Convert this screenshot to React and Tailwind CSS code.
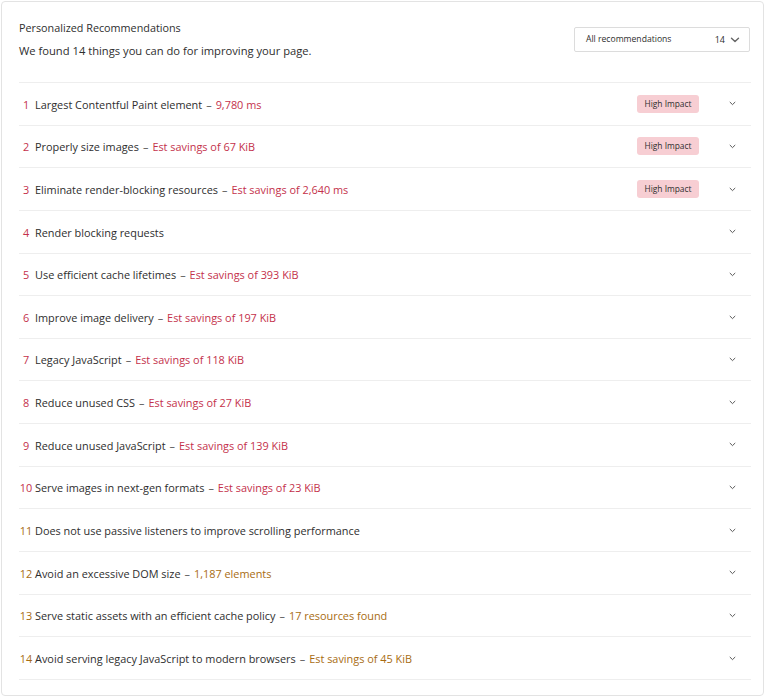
import React from "react";

const RED = "text-[#c4314b]";
const AMBER = "text-[#a86c12]";

const items = [
  { t: "Largest Contentful Paint element", d: "9,780 ms", c: "red", hi: true },
  { t: "Properly size images", d: "Est savings of 67 KiB", c: "red", hi: true },
  { t: "Eliminate render-blocking resources", d: "Est savings of 2,640 ms", c: "red", hi: true },
  { t: "Render blocking requests", d: null, c: "red" },
  { t: "Use efficient cache lifetimes", d: "Est savings of 393 KiB", c: "red" },
  { t: "Improve image delivery", d: "Est savings of 197 KiB", c: "red" },
  { t: "Legacy JavaScript", d: "Est savings of 118 KiB", c: "red" },
  { t: "Reduce unused CSS", d: "Est savings of 27 KiB", c: "red" },
  { t: "Reduce unused JavaScript", d: "Est savings of 139 KiB", c: "red" },
  { t: "Serve images in next-gen formats", d: "Est savings of 23 KiB", c: "red" },
  { t: "Does not use passive listeners to improve scrolling performance", d: null, c: "amber" },
  { t: "Avoid an excessive DOM size", d: "1,187 elements", c: "amber" },
  { t: "Serve static assets with an efficient cache policy", d: "17 resources found", c: "amber" },
  { t: "Avoid serving legacy JavaScript to modern browsers", d: "Est savings of 45 KiB", c: "amber" },
];

function Chevron({ className }) {
  return (
    <svg viewBox="0 0 10 6" className={className} fill="none" stroke="currentColor" strokeWidth="1.4" strokeLinecap="round" strokeLinejoin="round">
      <path d="M1.5 1.2 L5 4.6 L8.5 1.2" />
    </svg>
  );
}

export default function App() {
  return (
    <div className="w-[768px] h-[697px] bg-white">
      <div className="ml-[1px] mt-[1px] w-[763px] h-[695px] border border-[#e3e3e3] rounded-[4px] bg-white font-['Open_Sans','Noto_Sans',sans-serif] text-[#2e2e2e]">
        <div className="flex justify-between pl-[17px] pr-[13px]">
          <div className="pt-[17px]">
            <div className="text-[10.8px] leading-[18px]">Personalized Recommendations</div>
            <div className="text-[11.2px] leading-[18px] mt-[5px]">We found 14 things you can do for improving your page.</div>
          </div>
          <div className="mt-[25px] w-[176px] h-[25px] border border-[#dcdcdc] rounded-[2px] flex items-center pl-[11px] pr-[9px] text-[8.6px]">
            <span className="flex-1">All recommendations</span>
            <span className="mr-[5px] text-[9px]">14</span>
            <Chevron className="w-[10px] h-[6px] text-[#666]" />
          </div>
        </div>
        <div className="mt-[22px] ml-[17px] w-[732px] border-t border-[#eeeeee]">
          {items.map((it, i) => {
            const col = it.c === "red" ? RED : AMBER;
            return (
              <div key={i} className="h-[42.65px] border-b border-[#eeeeee] flex items-center">
                <div className="flex-1 flex items-center text-[10.9px] whitespace-nowrap mt-[2px]">
                  <span className={`${col} w-[14px] text-center mr-[2px]`}>{i + 1}</span>
                  <span>{it.t}</span>
                  {it.d && (
                    <>
                      <span className="text-[#555] mx-[4px]">–</span>
                      <span className={col}>{it.d}</span>
                    </>
                  )}
                </div>
                {it.hi && (
                  <span className="w-[62px] h-[18px] rounded-[3px] bg-[#f7ced3] text-[8.4px] flex items-center justify-center mr-[30px]">High Impact</span>
                )}
                <Chevron className="w-[7px] h-[5px] text-[#555] mr-[15px]" />
              </div>
            );
          })}
        </div>
      </div>
    </div>
  );
}
